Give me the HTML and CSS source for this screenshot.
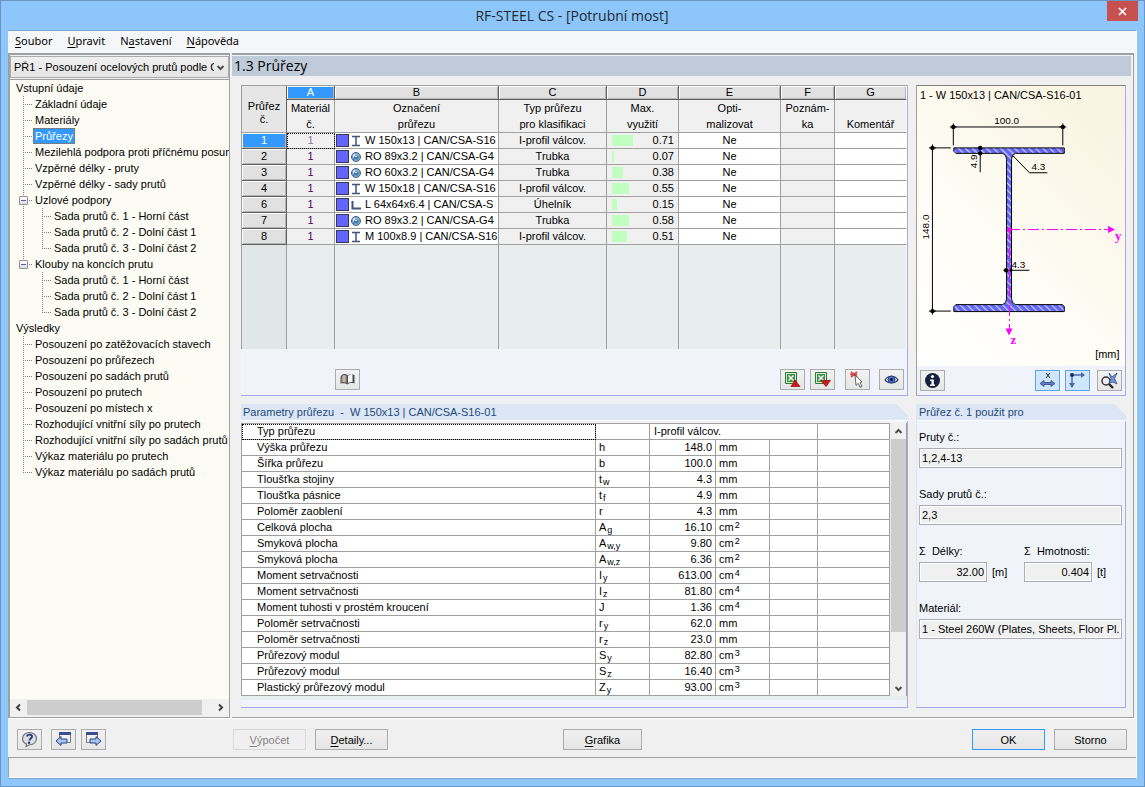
FILE: index.html
```html
<!DOCTYPE html>
<html lang="cs">
<head>
<meta charset="utf-8">
<title>RF-STEEL CS - [Potrubní most]</title>
<link rel="stylesheet" href="styles.css">
</head>
<body>
<svg class="defs" aria-hidden="true">
  <symbol id="i-beam" viewBox="0 0 12 12"><path d="M2 1.5h8M2 10.5h8M6 1.5v9" fill="none" stroke="#44537f" stroke-width="1.5"/></symbol>
  <symbol id="i-pipe" viewBox="0 0 12 12"><circle cx="6" cy="6" r="4.5" fill="#8ba9cc" stroke="#40658f"/><circle cx="5" cy="5" r="2" fill="#e4eef7"/><path d="M6 3l1 2 3 1-2 1v3L6 8 3 9l1-3" fill="#3c7db4"/><path d="M6 4l1 2H5z" fill="#fff"/></symbol>
  <symbol id="i-angle" viewBox="0 0 12 12"><path d="M2.500 2v7.500H11" fill="none" stroke="#44537f" stroke-width="2"/></symbol>
  <symbol id="i-up" viewBox="0 0 9 9"><path d="M1.5 6l3-3 3 3" fill="none" stroke="#505050" stroke-width="2"/></symbol>
  <symbol id="i-down" viewBox="0 0 9 9"><path d="M1.5 3l3 3 3-3" fill="none" stroke="#505050" stroke-width="2"/></symbol>
  <symbol id="i-left" viewBox="0 0 9 9"><path d="M6 1.5l-3 3 3 3" fill="none" stroke="#404040" stroke-width="2"/></symbol>
  <symbol id="i-right" viewBox="0 0 9 9"><path d="M3 1.5l3 3-3 3" fill="none" stroke="#404040" stroke-width="2"/></symbol>
  <symbol id="i-excel" viewBox="0 0 17 17"><path d="M1.5 1.5h11v11h-11z" fill="#d5e8cf" stroke="#2d7a35"/><path d="M3 3h8v8H3z" fill="#3f9147"/><path d="M4.500 4.500l5 5M9.500 4.500l-5 5" stroke="#fff" stroke-width="1.400"/></symbol>
</svg>
<div class="window">
  <header class="titlebar">
    <h1 class="caption">RF-STEEL CS - [Potrubní most]</h1>
    <button class="close" type="button" aria-label="Zavřít"><svg width="9" height="9" viewBox="0 0 9 9"><path d="M1 1l7 7M8 1L1 8" stroke="#fff" stroke-width="1.7"/></svg></button>
  </header>
  <div class="client">
    <nav class="menu">
      <a href="#"><u>S</u>oubor</a><a href="#"><u>U</u>pravit</a><a href="#">N<u>a</u>stavení</a><a href="#"><u>N</u>ápověda</a>
    </nav>
    <div class="body">
      <aside class="sidebar">
        <div class="combo">
          <select aria-label="Návrhový případ"><option>PŘ1 - Posouzení ocelových prutů podle CSA</option></select>
          <svg class="combo-arrow" width="9" height="9"><use href="#i-down"/></svg>
        </div>
        <div class="tree">
          <div class="root">Vstupní údaje</div>
          <ul>
            <li>Základní údaje</li>
            <li>Materiály</li>
            <li><span class="selected">Průřezy</span></li>
            <li>Mezilehlá podpora proti příčnému posunu</li>
            <li>Vzpěrné délky - pruty</li>
            <li>Vzpěrné délky - sady prutů</li>
            <li><button class="expander" type="button" aria-label="Sbalit"></button>Uzlové podpory
              <ul><li>Sada prutů č. 1 - Horní část</li><li>Sada prutů č. 2 - Dolní část 1</li><li>Sada prutů č. 3 - Dolní část 2</li></ul></li>
            <li class="end"><button class="expander" type="button" aria-label="Sbalit"></button>Klouby na koncích prutu
              <ul><li>Sada prutů č. 1 - Horní část</li><li>Sada prutů č. 2 - Dolní část 1</li><li>Sada prutů č. 3 - Dolní část 2</li></ul></li>
          </ul>
          <div class="root">Výsledky</div>
          <ul>
            <li>Posouzení po zatěžovacích stavech</li>
            <li>Posouzení po průřezech</li>
            <li>Posouzení po sadách prutů</li>
            <li>Posouzení po prutech</li>
            <li>Posouzení po místech x</li>
            <li>Rozhodující vnitřní síly po prutech</li>
            <li>Rozhodující vnitřní síly po sadách prutů</li>
            <li>Výkaz materiálu po prutech</li>
            <li>Výkaz materiálu po sadách prutů</li>
          </ul>
        </div>
        <div class="hscroll">
          <button type="button" aria-label="Doleva"><svg width="9" height="9"><use href="#i-left"/></svg></button>
          <span class="hthumb"></span>
          <button type="button" aria-label="Doprava"><svg width="9" height="9"><use href="#i-right"/></svg></button>
        </div>
      </aside>

      <main class="main">
        <h2 class="heading">1.3 Průřezy</h2>
        <div class="content">
          <section class="panel grid-panel">
            <table class="sections">
              <colgroup><col class="c0"><col class="ca"><col class="cb"><col class="cc"><col class="cd"><col class="ce"><col class="cf"><col class="cg"></colgroup>
              <thead>
                <tr class="letters"><th rowspan="2" class="corner">Průřez<br>č.</th><th class="on">A</th><th>B</th><th>C</th><th>D</th><th>E</th><th>F</th><th>G</th></tr>
                <tr class="names"><th>Materiál<br>č.</th><th>Označení<br>průřezu</th><th>Typ průřezu<br>pro klasifikaci</th><th>Max.<br>využití</th><th>Opti-<br>malizovat</th><th>Poznám-<br>ka</th><th><br>Komentář</th></tr>
              </thead>
              <tbody>
                <tr class="current"><th>1</th><td class="mat">1</td><td class="w"><div class="desc"><i></i><svg width="12" height="12"><use href="#i-beam"/></svg>W 150x13 | CAN/CSA-S16</div></td><td>I-profil válcov.</td><td><div class="use"><span class="track"><b style="width:71%"></b></span>0.71</div></td><td class="w">Ne</td><td></td><td class="w"></td></tr>
                <tr><th>2</th><td class="mat">1</td><td class="w"><div class="desc"><i></i><svg width="12" height="12"><use href="#i-pipe"/></svg>RO 89x3.2 | CAN/CSA-G4</div></td><td>Trubka</td><td><div class="use"><span class="track"><b style="width:7%"></b></span>0.07</div></td><td class="w">Ne</td><td></td><td class="w"></td></tr>
                <tr><th>3</th><td class="mat">1</td><td class="w"><div class="desc"><i></i><svg width="12" height="12"><use href="#i-pipe"/></svg>RO 60x3.2 | CAN/CSA-G4</div></td><td>Trubka</td><td><div class="use"><span class="track"><b style="width:38%"></b></span>0.38</div></td><td class="w">Ne</td><td></td><td class="w"></td></tr>
                <tr><th>4</th><td class="mat">1</td><td class="w"><div class="desc"><i></i><svg width="12" height="12"><use href="#i-beam"/></svg>W 150x18 | CAN/CSA-S16</div></td><td>I-profil válcov.</td><td><div class="use"><span class="track"><b style="width:55%"></b></span>0.55</div></td><td class="w">Ne</td><td></td><td class="w"></td></tr>
                <tr><th>6</th><td class="mat">1</td><td class="w"><div class="desc"><i></i><svg width="12" height="12"><use href="#i-angle"/></svg>L 64x64x6.4 | CAN/CSA-S</div></td><td>Úhelník</td><td><div class="use"><span class="track"><b style="width:15%"></b></span>0.15</div></td><td class="w">Ne</td><td></td><td class="w"></td></tr>
                <tr><th>7</th><td class="mat">1</td><td class="w"><div class="desc"><i></i><svg width="12" height="12"><use href="#i-pipe"/></svg>RO 89x3.2 | CAN/CSA-G4</div></td><td>Trubka</td><td><div class="use"><span class="track"><b style="width:58%"></b></span>0.58</div></td><td class="w">Ne</td><td></td><td class="w"></td></tr>
                <tr><th>8</th><td class="mat">1</td><td class="w"><div class="desc"><i></i><svg width="12" height="12"><use href="#i-beam"/></svg>M 100x8.9 | CAN/CSA-S16</div></td><td>I-profil válcov.</td><td><div class="use"><span class="track"><b style="width:51%"></b></span>0.51</div></td><td class="w">Ne</td><td></td><td class="w"></td></tr>
                <tr class="filler"><td></td><td></td><td></td><td></td><td></td><td></td><td></td><td></td></tr>
              </tbody>
            </table>
            <div class="tools grid-tools">
              <button class="ibtn library" type="button" aria-label="Knihovna průřezů"><svg width="17" height="17" viewBox="0 0 17 17"><path d="M1.5 12.500V6c1-3 5-4 7-1.500 2-2 5.500-1 7-.5v8.500c-3-.8-5-.5-7 1-2-1.500-4-1.500-7-1z" fill="#4d4d55"/><path d="M2.500 11.500V6.500c1-2.500 3-3 5-1.800v7c-2-1-3.500-.8-5-.2z" fill="#a69f90"/><path d="M9 5c1.500-2 3.500-2 4.500-1.500V11c-2 0-3 0-4.500 1z" fill="#f4f4f0"/><path d="M5 4.500v6.500" stroke="#dcd6c8"/></svg></button>
              <button class="ibtn" type="button" aria-label="Export do Excelu"><svg width="17" height="17"><use href="#i-excel"/><path d="M7 15.500l4-6.500 5 6.500z" fill="#d11a20" stroke="#8f0c10" stroke-width=".7"/></svg></button>
              <button class="ibtn" type="button" aria-label="Import z Excelu"><svg width="17" height="17"><use href="#i-excel"/><path d="M7 9.500h9.500L12 15.500z" fill="#d11a20" stroke="#8f0c10" stroke-width=".7"/></svg></button>
              <button class="ibtn pick" type="button" aria-label="Vybrat v grafice"><svg width="17" height="17" viewBox="0 0 17 17"><path d="M2 1l6 5M8 1L2 6M1 3.500h7" stroke="#d8484a" stroke-width="1.700"/><path d="M6 4l7 7-2 .5 2 4-2 .8-1.700-4-2.300 2z" fill="#fff" stroke="#555" stroke-width=".9"/></svg></button>
              <button class="ibtn eye" type="button" aria-label="Zobrazit"><svg width="17" height="17" viewBox="0 0 17 17"><path d="M2 9c3-5 10-5 13 0-3 4-10 4-13 0z" fill="#dfe6f5" stroke="#333b55" stroke-width="1.200"/><circle cx="8.500" cy="8.500" r="3.500" fill="#4a72c8" stroke="#26408a"/><circle cx="8.500" cy="8.500" r="1.500" fill="#0c1538"/></svg></button>
            </div>
          </section>

          <section class="panel preview">
            <svg class="drawing" viewBox="0 0 209 280" role="img" aria-label="Průřez W 150x13">
              <defs>
                <pattern id="hatch" width="5" height="5" patternUnits="userSpaceOnUse" patternTransform="rotate(-45)"><rect width="5" height="5" fill="#6464f5"/><rect width="1.200" height="5" fill="#c8d0ff"/></pattern>
              </defs>
              <text x="3" y="12">1 - W 150x13 | CAN/CSA-S16-01</text>
              <path d="M37 61.500h111v5.500h-49q-4 1-4 6v140q0 5 4 6h47l2 2v5H37v-5l2-2h47q4-1 4-6v-140q0-5-4-6H39l-2-2z" fill="url(#hatch)" stroke="#000"/>
              <path d="M36.500 40.500h110M36.500 40v19M146.500 40v19M15.500 61.500v164M15.500 61.500H34M15.500 225.500H34M63.500 61v25M96 69l17 17.500h18M87 184.500h26" fill="none" stroke="#000"/>
              <g fill="#000"><circle cx="36.500" cy="40.500" r="2.200"/><circle cx="146.500" cy="40.500" r="2.200"/><circle cx="15.500" cy="61.500" r="2.200"/><circle cx="15.500" cy="225.500" r="2.200"/><circle cx="63.500" cy="61.500" r="2.200"/><circle cx="63.500" cy="67" r="2.200"/><circle cx="89.500" cy="184.500" r="2.200"/><circle cx="94" cy="184.500" r="1.800"/></g>
              <path d="M33 40.500h7M143 40.500h7M36.500 37v4M146.500 37v4M12 61.500h7M12 225.500h7M15.500 58v7M15.500 222v7" stroke="#000"/>
              <path class="axis-line" d="M92.500 143.500H192"/>
              <path class="axis-line" d="M92.500 143.500V244"/>
              <g fill="#ff00ff"><circle cx="92.500" cy="143.500" r="2.200"/><path d="M192 140l7 3.500-7 3.500zM89 243h7l-3.500 7z"/></g>
              <text class="axis" x="199" y="154">y</text><text class="axis" x="94" y="259">z</text>
              <g class="dim"><text x="90" y="38" text-anchor="middle">100.0</text><text x="122" y="84" text-anchor="middle">4.3</text><text x="95" y="182">4.3</text><text transform="translate(12 141) rotate(-90)" text-anchor="middle">148.0</text><text transform="translate(60 75) rotate(-90)" text-anchor="middle">4.9</text></g>
              <text x="179" y="273">[mm]</text>
            </svg>
            <div class="tools">
              <button class="ibtn" type="button" aria-label="Informace"><svg width="17" height="17" viewBox="0 0 17 17"><circle cx="8.500" cy="8.500" r="7.500" fill="#17213f"/><circle cx="8.500" cy="4.500" r="1.600" fill="#fff"/><path d="M6 7.500h3.800v5H11V14H6v-1.500h1.500V9H6z" fill="#fff"/></svg></button>
              <button class="ibtn active dims" type="button" aria-label="Kóty"><svg width="17" height="17" viewBox="0 0 17 17"><path d="M7 1l4 5M11 1L7 6" stroke="#222" stroke-width="1"/><path d="M1 11.500l4-3v2h7v-2l4 3-4 3v-2H5v2z" fill="#5f80c6" stroke="#2e4a86" stroke-width=".8"/></svg></button>
              <button class="ibtn active" type="button" aria-label="Osy"><svg width="17" height="17" viewBox="0 0 17 17"><path d="M3 15V3h12" fill="none" stroke="#496aa8" stroke-width="1.400"/><path d="M12 0l4 3-4 3zM0 11h6l-3 5z" fill="#496aa8"/><circle cx="3" cy="3" r="2" fill="#1d2c52"/></svg></button>
              <button class="ibtn" type="button" aria-label="Přiblížit vše"><svg width="17" height="17" viewBox="0 0 17 17"><circle cx="5" cy="9" r="4" fill="#eee" stroke="#333" stroke-width="1.500"/><path d="M8 12l4 4" stroke="#222" stroke-width="2.400"/><path d="M8 1l3 4 5-4-2.500 5.500L16 12l-4-2-4 1 2-4.500z" fill="#7292d4" stroke="#304d90" stroke-width=".8"/></svg></button>
            </div>
          </section>

          <section class="panel params-panel">
            <h3 class="panel-title"><span>Parametry průřezu&nbsp; -&nbsp; W 150x13 | CAN/CSA-S16-01</span></h3>
            <div class="params-wrap">
              <table class="params">
                <colgroup><col><col class="p1"><col class="p2"><col class="p3"><col class="p4"><col class="p5"></colgroup>
                <tbody>
                  <tr><td class="focus">Typ průřezu</td><td></td><td colspan="3" class="type">I-profil válcov.</td><td></td></tr>
                  <tr><td>Výška průřezu</td><td>h</td><td>148.0</td><td>mm</td><td></td><td></td></tr>
                  <tr><td>Šířka průřezu</td><td>b</td><td>100.0</td><td>mm</td><td></td><td></td></tr>
                  <tr><td>Tloušťka stojiny</td><td>t<sub>w</sub></td><td>4.3</td><td>mm</td><td></td><td></td></tr>
                  <tr><td>Tloušťka pásnice</td><td>t<sub>f</sub></td><td>4.9</td><td>mm</td><td></td><td></td></tr>
                  <tr><td>Poloměr zaoblení</td><td>r</td><td>4.3</td><td>mm</td><td></td><td></td></tr>
                  <tr><td>Celková plocha</td><td>A<sub>g</sub></td><td>16.10</td><td>cm<sup>2</sup></td><td></td><td></td></tr>
                  <tr><td>Smyková plocha</td><td>A<sub>w,y</sub></td><td>9.80</td><td>cm<sup>2</sup></td><td></td><td></td></tr>
                  <tr><td>Smyková plocha</td><td>A<sub>w,z</sub></td><td>6.36</td><td>cm<sup>2</sup></td><td></td><td></td></tr>
                  <tr><td>Moment setrvačnosti</td><td>I<sub>y</sub></td><td>613.00</td><td>cm<sup>4</sup></td><td></td><td></td></tr>
                  <tr><td>Moment setrvačnosti</td><td>I<sub>z</sub></td><td>81.80</td><td>cm<sup>4</sup></td><td></td><td></td></tr>
                  <tr><td>Moment tuhosti v prostém kroucení</td><td>J</td><td>1.36</td><td>cm<sup>4</sup></td><td></td><td></td></tr>
                  <tr><td>Poloměr setrvačnosti</td><td>r<sub>y</sub></td><td>62.0</td><td>mm</td><td></td><td></td></tr>
                  <tr><td>Poloměr setrvačnosti</td><td>r<sub>z</sub></td><td>23.0</td><td>mm</td><td></td><td></td></tr>
                  <tr><td>Průřezový modul</td><td>S<sub>y</sub></td><td>82.80</td><td>cm<sup>3</sup></td><td></td><td></td></tr>
                  <tr><td>Průřezový modul</td><td>S<sub>z</sub></td><td>16.40</td><td>cm<sup>3</sup></td><td></td><td></td></tr>
                  <tr><td>Plastický průřezový modul</td><td>Z<sub>y</sub></td><td>93.00</td><td>cm<sup>3</sup></td><td></td><td></td></tr>
                </tbody>
              </table>
              <div class="vscroll">
                <button type="button" aria-label="Nahoru"><svg width="9" height="9"><use href="#i-up"/></svg></button>
                <span class="vthumb"></span>
                <button type="button" aria-label="Dolů"><svg width="9" height="9"><use href="#i-down"/></svg></button>
              </div>
            </div>
          </section>

          <section class="panel usage">
            <h3 class="panel-title"><span>Průřez č. 1 použit pro</span></h3>
            <div class="fields">
              <div class="field"><label for="members">Pruty č.:</label><input id="members" value="1,2,4-13" readonly></div>
              <div class="field"><label for="sets">Sady prutů č.:</label><input id="sets" value="2,3" readonly></div>
              <div class="pair">
                <div class="field"><label for="len">Σ&nbsp; Délky:</label><div class="unit"><input id="len" class="num" value="32.00" readonly>[m]</div></div>
                <div class="field"><label for="mass">Σ&nbsp; Hmotnosti:</label><div class="unit"><input id="mass" class="num" value="0.404" readonly>[t]</div></div>
              </div>
              <div class="field"><label for="mat">Materiál:</label><input id="mat" value="1 - Steel 260W (Plates, Sheets, Floor Pl., I" readonly></div>
            </div>
          </section>
        </div>
      </main>
    </div>

    <footer class="actions">
      <div class="left-actions">
        <button class="ibtn help" type="button" aria-label="Nápověda"><svg width="17" height="17" viewBox="0 0 17 17"><path d="M8.500 1.500c4 0 7 2.500 7 6s-3 6-6 6L5 15.500l.5-2.500C3 12 1.500 10 1.500 7.500c0-3.500 3-6 7-6z" fill="#dfe0e4" stroke="#73757c" stroke-width="1.200"/><path d="M6 5.500C6.500 3 11.500 3 11 5.800c-.3 1.400-2.300 1.700-2.600 3.700" fill="none" stroke="#273a73" stroke-width="1.900"/><circle cx="8" cy="11.800" r="1.200" fill="#273a73"/></svg></button>
        <button class="ibtn" type="button" aria-label="Předchozí tabulka"><svg width="17" height="17" viewBox="0 0 17 17"><path d="M4.500 2.500h11v9h-11z" fill="#f2f2f2" stroke="#777"/><path d="M4 1h12v3H4z" fill="#3c4f92"/><path d="M1 10l5-4.500V8h6v4H6v2.500z" fill="#a9c2ef" stroke="#24438d"/></svg></button>
        <button class="ibtn" type="button" aria-label="Další tabulka"><svg width="17" height="17" viewBox="0 0 17 17"><path d="M1.500 2.500h11v9h-11z" fill="#f2f2f2" stroke="#777"/><path d="M1 1h12v3H1z" fill="#3c4f92"/><path d="M16 10l-5-4.500V8H5v4h6v2.500z" fill="#a9c2ef" stroke="#24438d"/></svg></button>
      </div>
      <div class="main-actions">
        <button class="btn" type="button" disabled><u>V</u>ýpočet</button>
        <button class="btn" type="button"><u>D</u>etaily...</button>
        <button class="btn graphics" type="button"><u>G</u>rafika</button>
        <button class="btn default" type="button">OK</button>
        <button class="btn" type="button">Storno</button>
      </div>
    </footer>
    <div class="status"></div>
  </div>
</div>
</body>
</html>
```
FILE: styles.css
```css
* { box-sizing: border-box; }
body { margin: 0; font: 11px/16px "Liberation Sans", Arial, sans-serif; color: #000; background: #8cc6fa; }
button, input, select { font: inherit; color: inherit; margin: 0; padding: 0; }
h1, h2, h3 { margin: 0; font-size: 11px; font-weight: normal; }
ul { list-style: none; margin: 0; padding: 0; }
svg { display: block; flex: none; }
.defs { display: none; }

.window { min-height: 100vh; display: flex; flex-direction: column; border: 1px solid #6c96c2; padding: 0 7px 7px; background: #8cc6fa; }
.titlebar { height: 29px; display: grid; grid-template-columns: 1fr auto; }
.caption { font: 14px/29px "Open Sans", sans-serif; text-align: center; padding-left: 29px; color: #24292f; }
.close { width: 31px; height: 20px; margin-right: -1px; border: 0; background: #c75050; display: grid; place-items: center; }

.client { flex: 1; display: flex; flex-direction: column; background: #f0f0f0; border: 1px solid #7aa8d6; border-left: 0; border-right-color: #fff; }
.menu { height: 22px; display: flex; gap: 15px; padding: 0 7px; background: #f5f6f7; font: 11px/20px "Noto Sans", sans-serif; }
.menu a { color: #000; text-decoration: none; }
.menu a u { text-underline-offset: 2px; }

.body { flex: 1; display: grid; grid-template-columns: 222px minmax(0, 1fr); gap: 2px; padding-right: 2px; }

/* navigator */
.sidebar { min-width: 0; display: flex; flex-direction: column; border: solid #a0a0a0; border-width: 2px 1px 1px 2px; background: #fcfcf4; }
.combo { display: grid; align-items: center; padding: 1px 0; background: #f0f0f0; border-bottom: 1px solid #a0a0a0; }
.combo > * { grid-area: 1 / 1; }
.combo select { appearance: none; width: 100%; height: 22px; padding: 0 14px 0 3px; border: 1px solid #acacac; border-radius: 0; background: linear-gradient(#f0f0f0, #e5e5e5); overflow: hidden; }
.combo-arrow { justify-self: end; margin-right: 4px; pointer-events: none; }
.tree { flex: 1; overflow: hidden; white-space: nowrap; }
.root { padding-left: 6px; }
.tree ul { padding-left: 13px; }
.tree li { position: relative; padding-left: 12px; background: repeating-linear-gradient(#808080 0 1px, transparent 1px 2px) 0 0 / 1px 100% no-repeat, repeating-linear-gradient(90deg, #808080 0 1px, transparent 1px 2px) 0 8px / 9px 1px no-repeat; }
.tree li:last-child { background-size: 1px 9px, 9px 1px; }
.tree li ul { padding-left: 7px; }
.selected { display: inline-block; margin-left: -2px; padding: 0 2px; color: #fff; background: #3399ff; outline: 1px dotted #b46414; outline-offset: -1px; }
.expander { position: absolute; left: -4px; top: 4px; width: 9px; height: 9px; border: 1px solid #919191; border-radius: 1px; background: linear-gradient(#4b63a7, #4b63a7) center / 5px 1px no-repeat, linear-gradient(#fff, #ddd); }
.hscroll { display: flex; height: 18px; background: #f0f0f0; }
.hscroll button, .vscroll button { width: 17px; height: 16px; border: 0; background: none; display: grid; place-items: center; }
.hthumb { flex: 1; margin: 1px 10px 2px 0; background: #cdcdcd; }

/* main area */
.main { display: flex; flex-direction: column; border: solid #a0a0a0; border-width: 2px 1px 1px 0; padding: 1px 1px 9px 0; }
.heading { margin-right: 1px; height: 20px; padding-left: 2px; background: #bfcbd9; font: 14px/20px "Open Sans", sans-serif; }
.content { flex: 1; display: grid; grid-template-columns: minmax(0, 1fr) 210px; grid-template-rows: auto 1fr; gap: 8px; padding: 9px 6px 0 9px; }
.panel { display: flex; flex-direction: column; min-width: 0; background: #f0f4fa; border: solid #a8a8ec; border-width: 0 1px 1px 0; }
.tools { display: flex; align-items: center; height: 29px; }
.grid-tools { height: 46px; padding: 15px 3px 0 94px; gap: 5px; }
.ibtn { width: 25px; height: 21px; display: grid; place-items: center; border: 1px solid #acacac; background: linear-gradient(#f2f2f2, #e6e6e6); }
.library { margin-right: auto; }
.pick { margin: 0 4px 0 5px; }

table { border-collapse: separate; border-spacing: 0; table-layout: fixed; width: 100%; line-height: 15px; }
th, td { padding: 0; font-weight: normal; white-space: nowrap; overflow: hidden; border: solid #a0a0a0; border-width: 0 1px 1px 0; height: 16px; }
.sections { border: solid #a0a0a0; border-width: 1px 0 0 1px; text-align: center; }
.sections th:last-child, .sections td:last-child { border-right-color: #fff; }
.c0 { width: 45px; } .ca { width: 48px; } .cb { width: 164px; } .cc { width: 108px; }
.cd { width: 72px; } .ce { width: 102px; } .cf { width: 54px; }
.sections td { background: #f0f0f0; }
.sections td.w { background: #fff; }
.letters th { height: 14px; line-height: 13px; background: #e1e1e1; border-color: #606060; box-shadow: inset 1px 1px #fff, inset -1px -1px #b4b4b4; }
.letters .on { background: #3399ff; color: #fff; }
.letters .corner, .names th { background: #f0f0f0; box-shadow: none; border-color: #a0a0a0; }
.letters .corner { border-right-color: #606060; background: #e6e6e6; padding-top: 8px; }
.names th { height: 33px; line-height: 16px; }
tbody th { background: #e1e1e1; border-color: #606060; box-shadow: inset 1px 1px #fff, inset -1px -1px #b4b4b4; }
.current th { background: #3399ff; color: #fff; }
.mat { color: #500050; }
.current .mat { color: #8c788c; outline: 1px dotted #000; outline-offset: -1px; }
.desc { display: flex; align-items: center; height: 15px; padding-left: 1px; }
.desc i { width: 13px; height: 13px; flex: none; border: 1px solid #383850; background: #6464ff; }
.desc svg { margin: 0 3px 0 1px; }
.use { display: flex; align-items: center; justify-content: space-between; height: 15px; padding: 0 4px 0 5px; }
.track { width: 30px; height: 11px; }
.track b { display: block; height: 11px; background: #c0ffc0; }
.sections .filler td { height: 104px; background: #e8eeee; border-bottom: 0; }
.sections .filler td:first-child { background: #e1e6e6; }

.preview { border-left: 1px solid #a0a0a0; border-top: 1px solid #808080; }
.drawing { width: 100%; height: 280px; background: linear-gradient(225deg, #f8f3df, #fffefa 75%, #fff); font-size: 11px; }
.axis { fill: #ff00ff; font: bold 13px "Liberation Serif", serif; }
.axis-line { fill: none; stroke: #ff00ff; stroke-width: 1; stroke-dasharray: 11 3 2 3; shape-rendering: crispEdges; }
.dim { font-size: 10px; }
.preview .tools { padding: 0 3px; gap: 5px; }
.preview .dims { margin-left: auto; }
.preview .tools .ibtn:last-child { margin-left: 2px; }
.preview .active { border-color: #5aa5ea; background: #cfe6fc; }

.panel-title { height: 17px; line-height: 16px; margin-right: -1px; padding-left: 2px; background: linear-gradient(225deg, #f0f0f0 8px, #dce6f4 8px); border-bottom: 1px solid #fff; color: #1f4a7c; }
.params-wrap { display: flex; margin-top: 2px; padding-bottom: 4px; background: #e8eeee; gap: 1px; }
.params { flex: 1; border: solid #a0a0a0; border-width: 1px 0 0 1px; background: #fff; }
.params td { padding-left: 3px; }
.params td:first-child { padding-left: 15px; }
.params td:nth-child(3) { padding-right: 3px; text-align: right; }
.params td.type { padding-left: 4px; text-align: left; }
.params .focus { outline: 1px dotted #000; outline-offset: -1px; }
.p1 { width: 54px; } .p2 { width: 66px; } .p3 { width: 54px; } .p4 { width: 48px; } .p5 { width: 72px; }
sub, sup { font-size: 9px; line-height: 1px; }
sub { vertical-align: -2px; padding-left: 1px; }
sup { vertical-align: 3px; padding-left: 1px; }
.vscroll { width: 16px; display: flex; flex-direction: column; background: #f0f0f0; border-right: 1px solid #a0a0a0; }
.vscroll button { width: 15px; }
.vthumb { flex: 0 0 193px; background: #cdcdcd; }
.vscroll button:last-child { margin-top: auto; }

.usage { border-left: 1px solid #dce6f4; }
.fields { display: flex; flex-direction: column; gap: 18px; padding: 8px 3px 0 2px; }
.field { display: flex; flex-direction: column; gap: 3px; min-width: 0; }
.field input { width: 100%; height: 20px; padding: 0 2px; border: 1px solid #abadb3; border-radius: 0; background: #f0f0f0; box-shadow: inset 0 0 0 1px #fff; }
.pair { display: flex; gap: 18px; }
.unit { display: flex; align-items: center; gap: 5px; width: 87px; }
.unit .num { width: 68px; flex: none; text-align: right; }

/* bottom bar */
.actions { display: grid; grid-template-columns: 222px minmax(0, 1fr); gap: 2px; height: 39px; align-items: center; border-top: 1px solid #fff; padding-top: 3px; }
.left-actions, .main-actions { display: flex; }
.left-actions { padding-left: 9px; gap: 5px; }
.help { margin-right: 4px; }
.main-actions { gap: 9px; padding: 0 9px 0 1px; }
.btn { width: 73px; height: 21px; border: 1px solid #acacac; background: linear-gradient(#f0f0f0, #e5e5e5); }
.btn u { text-underline-offset: 2px; }
.btn:disabled { color: #838383; border-color: #d9d9d9; background: #efefef; }
.graphics { width: 79px; margin: 0 auto 0 166px; }
.default { border-color: #3399ff; }
.status { height: 21px; border-top: 1px solid #a0a0a0; border-left: 1px solid #a0a0a0; border-bottom: 1px solid #fff; }
```
